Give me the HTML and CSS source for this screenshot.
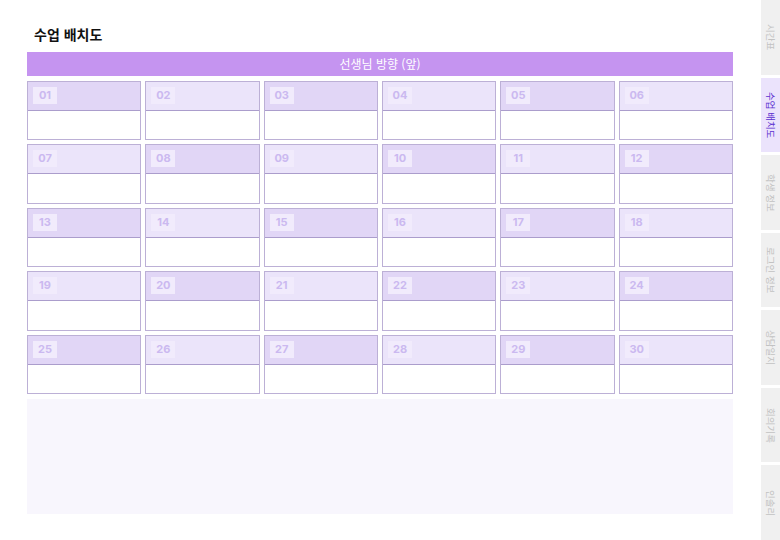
FILE: index.html
```html
<!DOCTYPE html>
<html lang="ko">
<head>
    <meta charset="UTF-8">
    <title>수업 배치도</title>
    <link rel="stylesheet" href="styles.css">
</head>
<body>
<div class="page">
    <main class="main">
        <h1 class="title">수업 배치도</h1>
        <div class="teacher-bar">선생님 방향 (앞)</div>
        <div class="seat-grid" id="seatGrid"></div>
        <div class="bottom-panel"></div>
    </main>
    <nav class="side-tabs">
        <div class="tab">시간표</div>
        <div class="tab active">수업 배치도</div>
        <div class="tab">학생 정보</div>
        <div class="tab">로그인 정보</div>
        <div class="tab">상담일지</div>
        <div class="tab">회의기록</div>
        <div class="tab">인솔리</div>
    </nav>
</div>

<script>
    const grid = document.getElementById('seatGrid');
    let html = '';
    for (let i = 1; i <= 30; i++) {
        const row = Math.floor((i - 1) / 6);
        const col = (i - 1) % 6;
        const dark = (row + col) % 2 === 0 ? ' dark' : '';
        const num = String(i).padStart(2, '0');
        html += `
            <div class="seat">
                <div class="seat-head${dark}"><span class="seat-no">${num}</span></div>
                <div class="seat-body"></div>
            </div>`;
    }
    grid.innerHTML = html;
</script>
</body>
</html>
```

FILE: styles.css
```css
body {
    margin: 0;
    font-family: "Noto Sans CJK KR", "Noto Sans", sans-serif;
    background: #ffffff;
    color: #111;
}
.page {
    display: flex;
    height: 540px;
    overflow: hidden;
}
.main {
    flex: 1;
    padding: 0 28px 0 27px;
}
.title {
    margin: 0;
    padding: 24px 0 0 7px;
    height: 28px;
    font-size: 14px;
    font-weight: 700;
    line-height: 20px;
}
.teacher-bar {
    height: 24px;
    line-height: 24px;
    background: #c594f0;
    color: #ffffff;
    text-align: center;
    font-size: 12px;
}
.seat-grid {
    display: grid;
    grid-template-columns: repeat(6, 1fr);
    column-gap: 4px;
    row-gap: 4px;
    margin-top: 5px;
}
.seat {
    height: 59.4px;
    box-sizing: border-box;
    border: 1px solid #bcb0d6;
    display: flex;
    flex-direction: column;
}
.seat-head {
    height: 29px;
    background: #ebe4fa;
    border-bottom: 1px solid #ab9dcc;
    padding: 5px 0 0 5px;
    box-sizing: border-box;
    display: flex;
    align-items: flex-start;
}
.seat-head.dark {
    background: #e1d6f6;
}
.seat-no {
    width: 24px;
    height: 17px;
    line-height: 17px;
    text-align: center;
    background: #f1ebfc;
    color: #cbb9f0;
    font-family: "Inter", "Noto Sans", sans-serif;
    font-size: 11px;
    font-weight: 700;
}
.seat-body {
    flex: 1;
    background: #ffffff;
}
.bottom-panel {
    margin-top: 5px;
    height: 115px;
    background: #f8f6fd;
}
.side-tabs {
    width: 19px;
    display: flex;
    flex-direction: column;
    gap: 3px;
}
.tab {
    flex: 1;
    background: #f0f0f0;
    color: #c2c2c2;
    font-size: 9.5px;
    writing-mode: vertical-rl;
    text-orientation: sideways;
    display: flex;
    align-items: center;
    justify-content: center;
    white-space: nowrap;
}
.tab.active {
    background: #ebe3fc;
    color: #5b2fd0;
}
```
